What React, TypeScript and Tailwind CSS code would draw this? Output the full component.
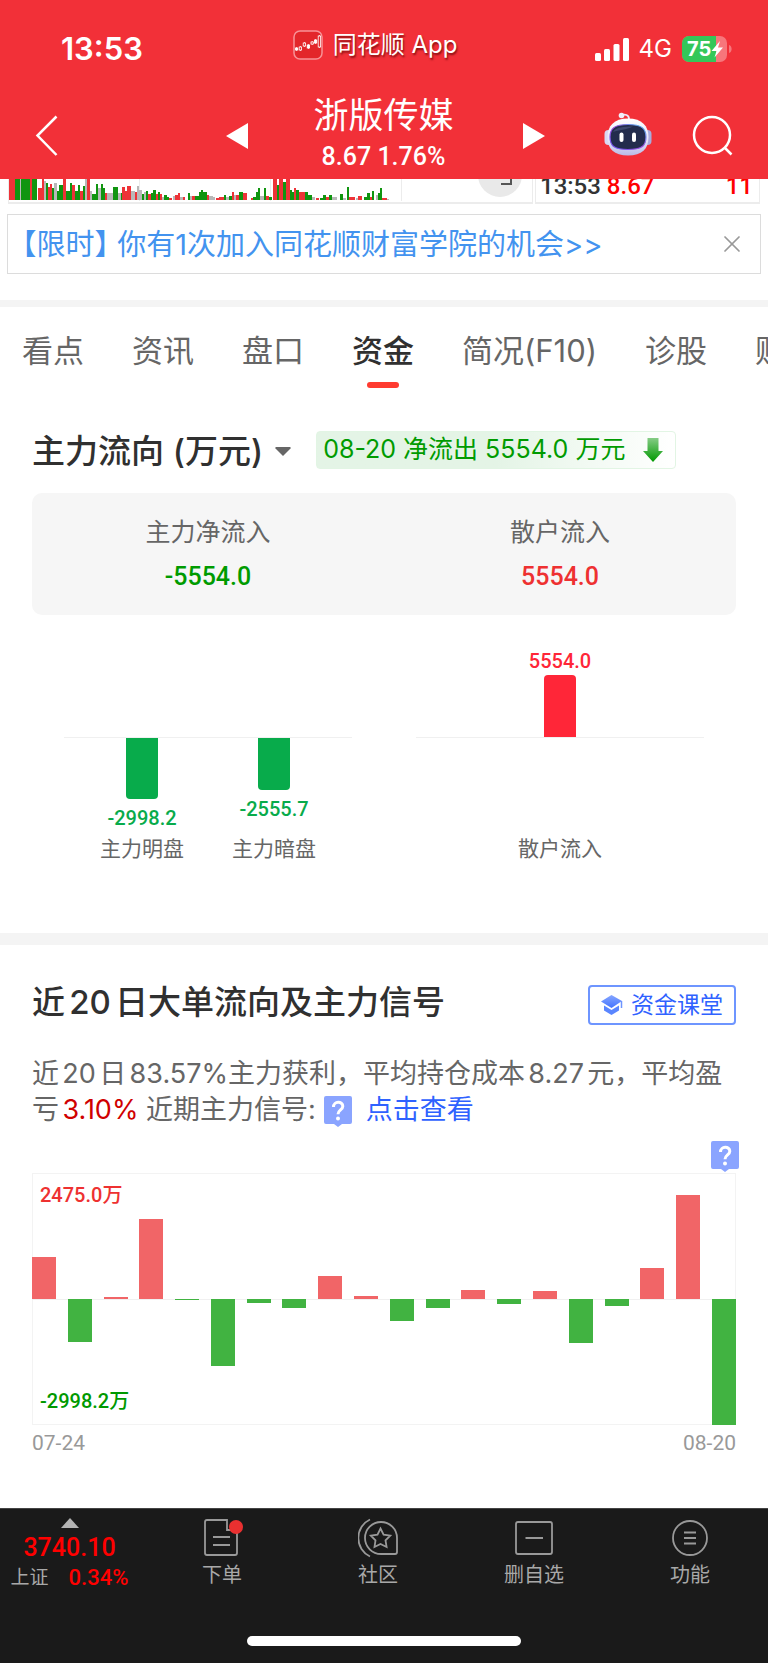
import { useState } from "react";
import { clsx } from "clsx";
import { X } from "lucide-react";

type Volume = [x: number, width: number, height: number, color: "r" | "g" | "n"];

// Tail of the intraday volume chart, scrolled under the header
const VOLUMES: Volume[] = [
  [0, 6, 22, "r"], [6, 5, 22, "g"], [11, 2, 22, "n"], [12, 9, 22, "g"], [21, 2, 22, "r"], [23, 5, 22, "g"],
  [29, 4, 12, "r"], [33, 2, 22, "r"], [35, 2, 19, "n"], [37, 2, 17, "g"], [39, 2, 13, "r"], [41, 2, 16, "r"],
  [43, 2, 12, "g"], [45, 3, 17, "n"], [48, 2, 9, "g"], [50, 4, 15, "g"], [54, 3, 22, "r"], [57, 4, 9, "g"],
  [61, 2, 17, "g"], [63, 3, 15, "r"], [66, 3, 9, "g"], [69, 2, 15, "g"], [71, 3, 9, "r"], [74, 2, 14, "g"],
  [76, 2, 22, "n"], [78, 3, 22, "r"], [81, 2, 9, "n"], [83, 4, 6, "g"], [87, 2, 16, "g"], [89, 3, 12, "n"],
  [92, 2, 16, "g"], [94, 2, 12, "g"], [96, 2, 7, "r"], [98, 6, 7, "n"], [104, 5, 13, "g"], [109, 3, 7, "n"],
  [112, 1, 7, "g"], [113, 3, 13, "r"], [116, 2, 9, "r"], [118, 4, 14, "r"], [122, 4, 9, "n"], [126, 2, 8, "r"],
  [128, 2, 14, "n"], [130, 3, 10, "n"], [133, 2, 6, "g"], [135, 2, 8, "n"], [137, 2, 9, "g"], [139, 3, 6, "r"],
  [142, 2, 7, "g"], [144, 3, 10, "g"], [147, 2, 6, "r"], [149, 2, 8, "g"], [151, 2, 6, "r"], [153, 2, 3, "n"],
  [155, 3, 5, "g"], [158, 2, 3, "g"], [160, 3, 2, "r"], [164, 2, 4, "n"], [166, 3, 5, "r"], [169, 2, 7, "r"],
  [171, 3, 3, "n"], [174, 2, 3, "r"], [179, 2, 7, "g"], [181, 2, 4, "n"], [183, 3, 4, "r"], [186, 4, 4, "g"],
  [190, 2, 8, "g"], [192, 2, 10, "g"], [194, 4, 8, "g"], [198, 2, 5, "r"], [200, 4, 4, "n"], [204, 2, 3, "n"],
  [207, 3, 2, "r"], [210, 5, 3, "r"], [215, 2, 5, "g"], [217, 3, 3, "n"], [220, 3, 4, "g"], [223, 2, 8, "r"],
  [225, 2, 5, "n"], [227, 3, 5, "r"], [230, 4, 8, "g"], [234, 4, 7, "r"], [242, 2, 2, "r"], [244, 3, 3, "g"],
  [247, 2, 8, "g"], [249, 2, 12, "g"], [251, 4, 4, "n"], [255, 2, 12, "g"], [257, 3, 4, "r"], [260, 3, 3, "g"],
  [264, 4, 22, "r"], [268, 2, 15, "g"], [270, 4, 22, "r"], [274, 3, 18, "g"], [277, 4, 22, "r"], [281, 2, 10, "g"],
  [283, 2, 8, "g"], [285, 2, 12, "r"], [287, 3, 10, "g"], [290, 6, 8, "r"], [296, 3, 8, "g"], [299, 4, 5, "g"],
  [303, 3, 3, "n"], [307, 3, 2, "r"], [311, 3, 2, "g"], [314, 3, 5, "g"], [317, 3, 3, "r"], [320, 3, 5, "g"],
  [323, 5, 3, "n"], [331, 3, 6, "g"], [334, 3, 2, "n"], [338, 2, 13, "g"], [340, 6, 3, "r"], [347, 3, 2, "n"],
  [349, 4, 4, "r"], [355, 3, 3, "g"], [358, 3, 7, "g"], [361, 2, 3, "r"], [363, 2, 9, "g"], [367, 2, 5, "n"],
  [369, 2, 7, "g"], [371, 2, 12, "g"], [373, 5, 2, "r"], [378, 2, 1, "n"],
];

const VOLUME_FILL = { r: "#ee3338", g: "#109510", n: "#b8b8b8" };

const TABS = ["看点", "资讯", "盘口", "资金", "简况(F10)", "诊股", "财务"];

// Daily net flow in 万, 07-24 to 08-20
const FLOWS = [
  1010, -1030, 48, 1895, -20, -1585, -105, -225, 550, 75, -525, -210, 205, -120, 185, -1050, -165, 745, 2475, -2998.2,
];
const FLOW_MAX = 2998.2;

function Candle({ x, y, h, solid }: { x: number; y: number; h: number; solid?: boolean }) {
  return (
    <g stroke="white" strokeWidth="0.8">
      <line x1={x + 1.2} x2={x + 1.2} y1={y - 1} y2={y + h + 1} />
      <rect x={x} y={y} width="2.4" height={h} fill={solid ? "white" : "#e3262a"} />
    </g>
  );
}

function AppLogo() {
  return (
    <svg viewBox="0 0 30 30" className="h-[30px] w-[30px]">
      <rect x="1" y="1" width="28" height="28" rx="6" fill="#e3262a" stroke="#f79296" strokeWidth="1.5" />
      <Candle x={2.4} y={18} h={2} solid />
      <Candle x={6.2} y={17} h={3} />
      <Candle x={10.2} y={13} h={3} />
      <Candle x={14.2} y={15} h={3} solid />
      <Candle x={18} y={12} h={2} />
      <Candle x={21.4} y={10} h={3} solid />
      <Candle x={25.2} y={6} h={11} />
    </svg>
  );
}

function Robot() {
  return (
    <svg viewBox="0 0 48 44" className="h-11 w-12">
      <defs>
        <linearGradient id="shell" x1="0" y1="0" x2="0" y2="1">
          <stop offset="0" stopColor="#ffffff" />
          <stop offset="0.6" stopColor="#e4e4f8" />
          <stop offset="1" stopColor="#b9bbe6" />
        </linearGradient>
        <linearGradient id="rim" x1="0" y1="1" x2="1" y2="0">
          <stop offset="0" stopColor="#6a5af0" />
          <stop offset="0.5" stopColor="#a04be0" />
          <stop offset="1" stopColor="#4cc3f0" />
        </linearGradient>
      </defs>
      <path d="M17 3.5 C21 1.5 25 3 25 7" fill="none" stroke="#eceafa" strokeWidth="1.8" />
      <circle cx="17.5" cy="3.5" r="2.8" fill="#f1effb" />
      <rect x="0.5" y="18" width="8" height="15" rx="4" fill="#d8d8f2" />
      <rect x="39.5" y="18" width="8" height="15" rx="4" fill="#a9abdc" />
      <path d="M24 6.5 C38 6.5 44.5 14 44.5 25 C44.5 37 38 43.5 24 43.5 C10 43.5 3.5 37 3.5 25 C3.5 14 10 6.5 24 6.5 Z" fill="url(#shell)" />
      <path d="M24 12.5 C37 12.5 42 16 42 25 C42 34.5 37 37.5 24 37.5 C11 37.5 6 34.5 6 25 C6 16 11 12.5 24 12.5 Z" fill="#232c4d" stroke="url(#rim)" strokeWidth="1.2" />
      <path d="M9 20 C12 15 20 14.5 29 14.5 C22 18 15 18 9 20 Z" fill="#48527a" opacity="0.7" />
      <rect x="15.5" y="20.5" width="4" height="9.5" rx="2" fill="white" />
      <rect x="28" y="20.5" width="4" height="9.5" rx="2" fill="white" />
    </svg>
  );
}

function Battery() {
  return (
    <svg viewBox="0 0 51 26" className="h-[26px] w-[51px]">
      <defs>
        <clipPath id="cell">
          <rect width="45" height="26" rx="7" />
        </clipPath>
      </defs>
      <g clipPath="url(#cell)">
        <rect width="45" height="26" fill="#f7767b" />
        <rect width="34" height="26" fill="#34c759" />
      </g>
      <path d="M47 9 C50.5 10 50.5 16 47 17 Z" fill="#f7767b" />
      <text x="5" y="20" className="font-['Inter',sans-serif] text-[20px] font-bold" fill="white">
        75
      </text>
      <path d="M38 5 L29.5 15 H34.5 L32.5 21.5 L41 11.5 H36 Z" fill="white" />
    </svg>
  );
}

function HelpBubble({ className }: { className?: string }) {
  return (
    <svg viewBox="0 0 28 31" className={clsx("h-[31px] w-7", className)}>
      <path d="M2 0 H26 Q28 0 28 2 V26 Q28 28 26 28 H18 L14 31 L10 28 H2 Q0 28 0 26 V2 Q0 0 2 0 Z" fill="#8aa4ff" />
      <path d="M9.5 11 C9.5 4.8 18.8 4.8 18.8 10.3 C18.8 14 14 14 14 18.3" fill="none" stroke="white" strokeWidth="3" />
      <circle cx="14" cy="22.5" r="2" fill="white" />
    </svg>
  );
}

function Header() {
  return (
    <header className="bg-[#f23038] text-white">
      <div className="grid h-[92px] grid-cols-[1fr_auto_1fr] items-center pt-[6px]">
        <span className="pl-[61px] text-[31px] font-semibold">13:53</span>
        <div className="flex items-center gap-[10px] pr-[18px] pb-[8px] text-2xl [text-shadow:1px_2px_2px_rgba(90,0,0,0.7)]">
          <AppLogo />
          <span>同花顺 App</span>
        </div>
        <div className="flex items-center justify-end gap-[10px] pr-[35px]">
          <svg viewBox="0 0 34 23" className="h-[23px] w-[34px]" fill="white">
            <rect x="0" y="15" width="6" height="8" rx="1.5" />
            <rect x="9" y="11" width="6" height="12" rx="1.5" />
            <rect x="18.5" y="6" width="6" height="17" rx="1.5" />
            <rect x="28" y="0" width="6" height="23" rx="1.5" />
          </svg>
          <span className="text-2xl">4G</span>
          <Battery />
        </div>
      </div>

      <div className="grid h-[87px] grid-cols-[1fr_auto_1fr] items-center pl-[2px]">
        <div className="flex items-center justify-between pl-[33px]">
          <button aria-label="返回">
            <svg viewBox="0 0 24 42" className="h-[42px] w-6" fill="none" stroke="white" strokeWidth="2.5">
              <path d="M21.5 1.5 L2.5 20.5 L21.5 40" />
            </svg>
          </button>
          <button aria-label="上一只">
            <svg viewBox="0 0 22 26" className="h-[26px] w-[22px]" fill="white">
              <path d="M22 0 V26 L0 13 Z" />
            </svg>
          </button>
        </div>
        <div className="w-[275px] pr-[3px] text-center">
          <h1 className="text-[35px] leading-[42px]">浙版传媒</h1>
          <p className="font-['Roboto',sans-serif] text-[25px] leading-[42px] font-medium">8.67 1.76%</p>
        </div>
        <div className="flex items-center justify-between pr-[35px]">
          <button aria-label="下一只">
            <svg viewBox="0 0 22 26" className="h-[26px] w-[22px]" fill="white">
              <path d="M0 0 V26 L22 13 Z" />
            </svg>
          </button>
          <div className="flex items-center gap-[40px]">
            <button aria-label="智能助手" className="pb-1">
              <Robot />
            </button>
            <button aria-label="搜索">
              <svg viewBox="0 0 41 41" className="h-[41px] w-[41px]" fill="none" stroke="white" strokeWidth="2.5">
                <circle cx="20" cy="20" r="18" />
                <path d="M32.5 32.5 L39.5 39.5" />
              </svg>
            </button>
          </div>
        </div>
      </div>
    </header>
  );
}

function QuoteStrip() {
  return (
    <div className="mx-2 grid grid-cols-[7fr_3fr] grid-rows-[25px] gap-[2px] overflow-hidden">
      <div className="flex justify-between overflow-hidden border-x border-b-2 border-[#ececec]">
        <svg viewBox="0 0 440 22" className="h-[22px] w-[440px]">
          <path d="M130.5 0 V22 M261.5 0 V22 M392.5 0 V22" stroke="#ececec" />
          {VOLUMES.map(([x, w, h, c]) => (
            <rect key={x} x={x} y={21 - h} width={w} height={h} fill={VOLUME_FILL[c]} />
          ))}
        </svg>
        <svg viewBox="0 0 44 22" className="mr-2.5 h-[22px] w-11">
          <circle cx="22" cy="-4" r="22" fill="#e9e9e9" />
          <path d="M23 5 H33 V0" fill="none" stroke="#555" strokeWidth="2" />
        </svg>
      </div>
      <div className="flex items-end justify-between border-x border-b-2 border-[#ececec] pr-1.5 pb-[2px] pl-1 font-['Roboto',sans-serif] text-2xl leading-7 font-medium">
        <span className="text-[#333]">
          13:53 <span className="text-[#f00]">8.67</span>
        </span>
        <span className="text-[#f00]">11</span>
      </div>
    </div>
  );
}

function Promo({ onClose }: { onClose: () => void }) {
  return (
    <div className="mx-[7px] mt-[10px] flex h-[60px] items-center justify-between border border-[#dcdcdc] pr-[14px] pl-[14px] text-[29px] text-[#4393ef]">
      <a href="#academy" className="pt-[2px] whitespace-nowrap">
        <span className="[font-feature-settings:'halt']">【限时】</span> 你有1次加入同花顺财富学院的机会&gt;&gt;
      </a>
      <button aria-label="关闭" onClick={onClose} className="text-[#999]">
        <X className="h-7 w-7" strokeWidth={1.5} />
      </button>
    </div>
  );
}

function Tabs() {
  const [active, setActive] = useState("资金");

  return (
    <nav className="flex h-[90px] gap-[48px] overflow-hidden border-t-[7px] border-[#f4f4f4] pl-[22px] text-[31px] whitespace-nowrap">
      {TABS.map((tab) => (
        <button
          key={tab}
          onClick={() => setActive(tab)}
          className={clsx(
            "flex shrink-0 flex-col items-center pt-6 leading-10",
            tab === active ? "font-medium text-[#303030]" : "text-[#666]"
          )}
        >
          {tab}
          {tab === active && <span className="mt-[11px] h-[6px] w-8 rounded-full bg-[#ff3b30]" />}
        </button>
      ))}
    </nav>
  );
}

function FlowBar({ label, value }: { label: string; value: number }) {
  const size = Math.round((Math.abs(value) / (value > 0 ? 5554 : 2998.2)) * 62);

  return (
    <div className="flex w-[132px] flex-col items-center">
      <div className="flex h-[92px] flex-col items-center justify-end">
        {value > 0 && (
          <>
            <span className="font-['Roboto',sans-serif] text-[20px] leading-7 font-medium text-[#ff2638]">{value.toFixed(1)}</span>
            <div className="w-8 rounded-t-[4px] bg-[#ff2638]" style={{ height: size }} />
          </>
        )}
      </div>
      <div className="flex h-[98px] flex-col items-center">
        {value < 0 && (
          <>
            <div className="w-8 rounded-b-[4px] bg-[#08ab4b]" style={{ height: size }} />
            <span className="mt-[5px] font-['Roboto',sans-serif] text-[20px] leading-7 font-medium text-[#08ab4b]">{value.toFixed(1)}</span>
          </>
        )}
      </div>
      <span className="text-[21px] leading-7 text-[#666]">{label}</span>
    </div>
  );
}

function MainFlow() {
  return (
    <section className="px-8 pt-[41px] pb-[70px]">
      <div className="flex h-[38px] items-center">
        <button className="flex items-center gap-[12px] pt-[3px] text-[33px] font-medium text-[#303030]">
          主力流向 (万元)
          <svg viewBox="0 0 16 9" className="h-[9px] w-4" fill="#666">
            <path d="M1 0 H15 L16 1 L8 9 L0 1 Z" />
          </svg>
        </button>
        <div className="ml-[25px] flex h-[38px] items-center gap-[18px] rounded-[4px] border border-[#e2f5e4] bg-linear-to-r from-[#e4f4e6] from-50% to-white pr-3 pl-[6px] text-[25px] whitespace-nowrap text-[#009b00]">
          08-20 净流出 5554.0 万元
          <svg viewBox="0 0 20 24" className="h-6 w-5">
            <defs>
              <linearGradient id="down" x1="0" y1="0" x2="0" y2="1">
                <stop offset="0" stopColor="#86cc86" />
                <stop offset="1" stopColor="#009900" />
              </linearGradient>
            </defs>
            <path d="M4.5 0 H15.5 V13 H20 L10 24 L0 13 H4.5 Z" fill="url(#down)" />
          </svg>
        </div>
      </div>

      <div className="mt-6 grid grid-cols-2 rounded-[10px] bg-[#f6f6f6] pt-[18px] pb-[17px] text-center">
        <div>
          <p className="text-[25px] leading-[42px] text-[#666]">主力净流入</p>
          <p className="mt-[3px] font-['Roboto',sans-serif] text-[25px] leading-[42px] font-medium text-[#009b00]">-5554.0</p>
        </div>
        <div>
          <p className="text-[25px] leading-[42px] text-[#666]">散户流入</p>
          <p className="mt-[3px] font-['Roboto',sans-serif] text-[25px] leading-[42px] font-medium text-[#ee3131]">5554.0</p>
        </div>
      </div>

      <div className="mt-[30px] grid grid-cols-2">
        <div className="relative flex justify-center">
          <div className="absolute inset-x-8 top-[92px] h-px bg-[#f0f0f0]" />
          <FlowBar label="主力明盘" value={-2998.2} />
          <FlowBar label="主力暗盘" value={-2555.7} />
        </div>
        <div className="relative flex justify-center">
          <div className="absolute inset-x-8 top-[92px] h-px bg-[#f0f0f0]" />
          <FlowBar label="散户流入" value={5554} />
        </div>
      </div>
    </section>
  );
}

function RecentFlow() {
  return (
    <section className="border-t-[12px] border-[#f4f4f4] px-8 pt-10 pb-12">
      <div className="flex h-10 items-center justify-between">
        <h2 className="pb-1 text-[33px] font-medium text-[#303030] [text-autospace:normal]">近20日大单流向及主力信号</h2>
        <a href="#course" className="flex h-10 items-center gap-2 rounded-[4px] border-2 border-[#6e95ff] px-[11px] text-[23px] text-[#2f62ff]">
          <svg viewBox="0 0 22 20" className="h-5 w-[22px]">
            <defs>
              <linearGradient id="cap" x1="0" y1="0" x2="0" y2="1">
                <stop offset="0" stopColor="#86a6ff" />
                <stop offset="1" stopColor="#4474ff" />
              </linearGradient>
            </defs>
            <path d="M10.5 0 L21 6 L10.5 13 L0 6.5 Z" fill="url(#cap)" />
            <path d="M3 10.5 L10.5 15 L18 10.5 V15.5 L10.5 20 L3 15.5 Z" fill="#5a86ff" />
            <path d="M20.5 6 V13" stroke="#6e95ff" strokeWidth="1.5" />
          </svg>
          资金课堂
        </a>
      </div>

      <p className="mt-[31px] text-[27px] leading-9 text-[#666] [text-autospace:normal]">
        近20日83.57%主力获利，平均持仓成本8.27元，平均盈亏<span className="text-[#d00000]">3.10%</span> 近期主力信号:
        <button aria-label="信号说明" className="mr-[14px] ml-2 align-middle">
          <HelpBubble className="block" />
        </button>
        <a href="#signal" className="text-[#2f62ff]">点击查看</a>
      </p>

      <div className="relative mt-[45px] flex h-[252px] justify-between outline -outline-offset-1 outline-[#f3f3f3]">
        <div className="absolute inset-x-0 top-[126px] h-px bg-[#f0f0f0]" />
        {FLOWS.map((flow, i) => {
          const height = `${(Math.abs(flow) / FLOW_MAX) * 100}%`;
          return (
            <div key={i} className="relative flex w-6 flex-col">
              <div className="flex flex-1 flex-col justify-end">
                {flow > 0 && <div className="bg-[#f16567]" style={{ height }} />}
              </div>
              <div className="flex-1">{flow < 0 && <div className="bg-[#41b341]" style={{ height }} />}</div>
            </div>
          );
        })}
        <span className="absolute top-[8px] left-[8px] font-['Roboto','Noto_Sans_CJK_SC',sans-serif] text-[20px] leading-7 font-medium text-[#ee3131]">2475.0万</span>
        <span className="absolute bottom-[10px] left-[8px] font-['Roboto','Noto_Sans_CJK_SC',sans-serif] text-[20px] leading-7 font-medium text-[#009900]">-2998.2万</span>
        <button aria-label="图表说明" className="absolute -top-8 -right-[3px]">
          <HelpBubble className="block" />
        </button>
      </div>
      <div className="mt-1 flex justify-between font-['Roboto',sans-serif] text-[21px] leading-7 text-[#999]">
        <span>07-24</span>
        <span>08-20</span>
      </div>
    </section>
  );
}

const NAV_ITEMS = [
  {
    label: "下单",
    icon: (
      <>
        <path d="M25 2 H5 Q3 2 3 4 V35 Q3 37 5 37 H33 Q35 37 35 35 V12 H25 Z M11 19 H28 M11 27 H28" />
        <circle cx="34" cy="9" r="7" fill="#e93030" stroke="none" />
      </>
    ),
  },
  {
    label: "社区",
    icon: (
      <>
        <path d="M23 4 A16 16 0 1 0 23 36 H37 Q39 36 39 34 V20 A16 16 0 0 0 23 4 Z" />
        <path d="M12 1.5 A20.5 20.5 0 0 0 12 38.5" />
        <path d="M22.5 10.5 L25.6 16.6 L32.3 17.6 L27.5 22.4 L28.6 29 L22.5 26 L16.5 29 L17.5 22.4 L12.8 17.6 L19.5 16.6 Z" />
      </>
    ),
  },
  {
    label: "删自选",
    icon: <path d="M4 4 H36 Q38 4 38 6 V34 Q38 36 36 36 H4 Q2 36 2 34 V6 Q2 4 4 4 Z M11.5 20 H29" />,
  },
  {
    label: "功能",
    icon: (
      <>
        <circle cx="20" cy="20" r="17" />
        <path d="M14 14.5 H26 M14 20 H26 M14 25.5 H26" />
      </>
    ),
  },
];

function BottomNav() {
  return (
    <footer className="border-t border-[#444] bg-[#1a1a1a] text-[#a8a8a8]">
      <div className="flex h-[127px] text-[20px]">
        <button className="flex w-[144px] flex-col items-center pt-[9px] pr-[5px]">
          <svg viewBox="0 0 18 10" className="h-[10px] w-[18px]" fill="#b3b3b3">
            <path d="M9 0 L18 10 H0 Z" />
          </svg>
          <span className="mt-1 font-['Roboto',sans-serif] text-[25px] leading-8 font-medium text-[#f00]">3740.10</span>
          <span className="flex items-center gap-5 text-[19px] leading-7">
            上证
            <span className="font-['Roboto',sans-serif] text-[22px] font-medium text-[#f00]">0.34%</span>
          </span>
        </button>
        {NAV_ITEMS.map((item) => (
          <button key={item.label} className="flex flex-1 flex-col items-center pt-[9px]">
            <svg viewBox="0 0 41 40" className="h-10 w-[41px]" fill="none" stroke="#999" strokeWidth="1.8">
              {item.icon}
            </svg>
            <span className="mt-[3px] leading-7">{item.label}</span>
          </button>
        ))}
      </div>
      <div className="flex justify-center pb-[17px]">
        <div className="h-[10px] w-[274px] rounded-full bg-white" />
      </div>
    </footer>
  );
}

export default function App() {
  const [showPromo, setShowPromo] = useState(true);

  return (
    <div className="flex min-h-screen flex-col bg-white font-['Inter','Noto_Sans_CJK_SC',sans-serif]">
      <Header />
      <QuoteStrip />
      {showPromo && <Promo onClose={() => setShowPromo(false)} />}
      <main className="mt-[26px] flex-1">
        <Tabs />
        <MainFlow />
        <RecentFlow />
      </main>
      <BottomNav />
    </div>
  );
}
